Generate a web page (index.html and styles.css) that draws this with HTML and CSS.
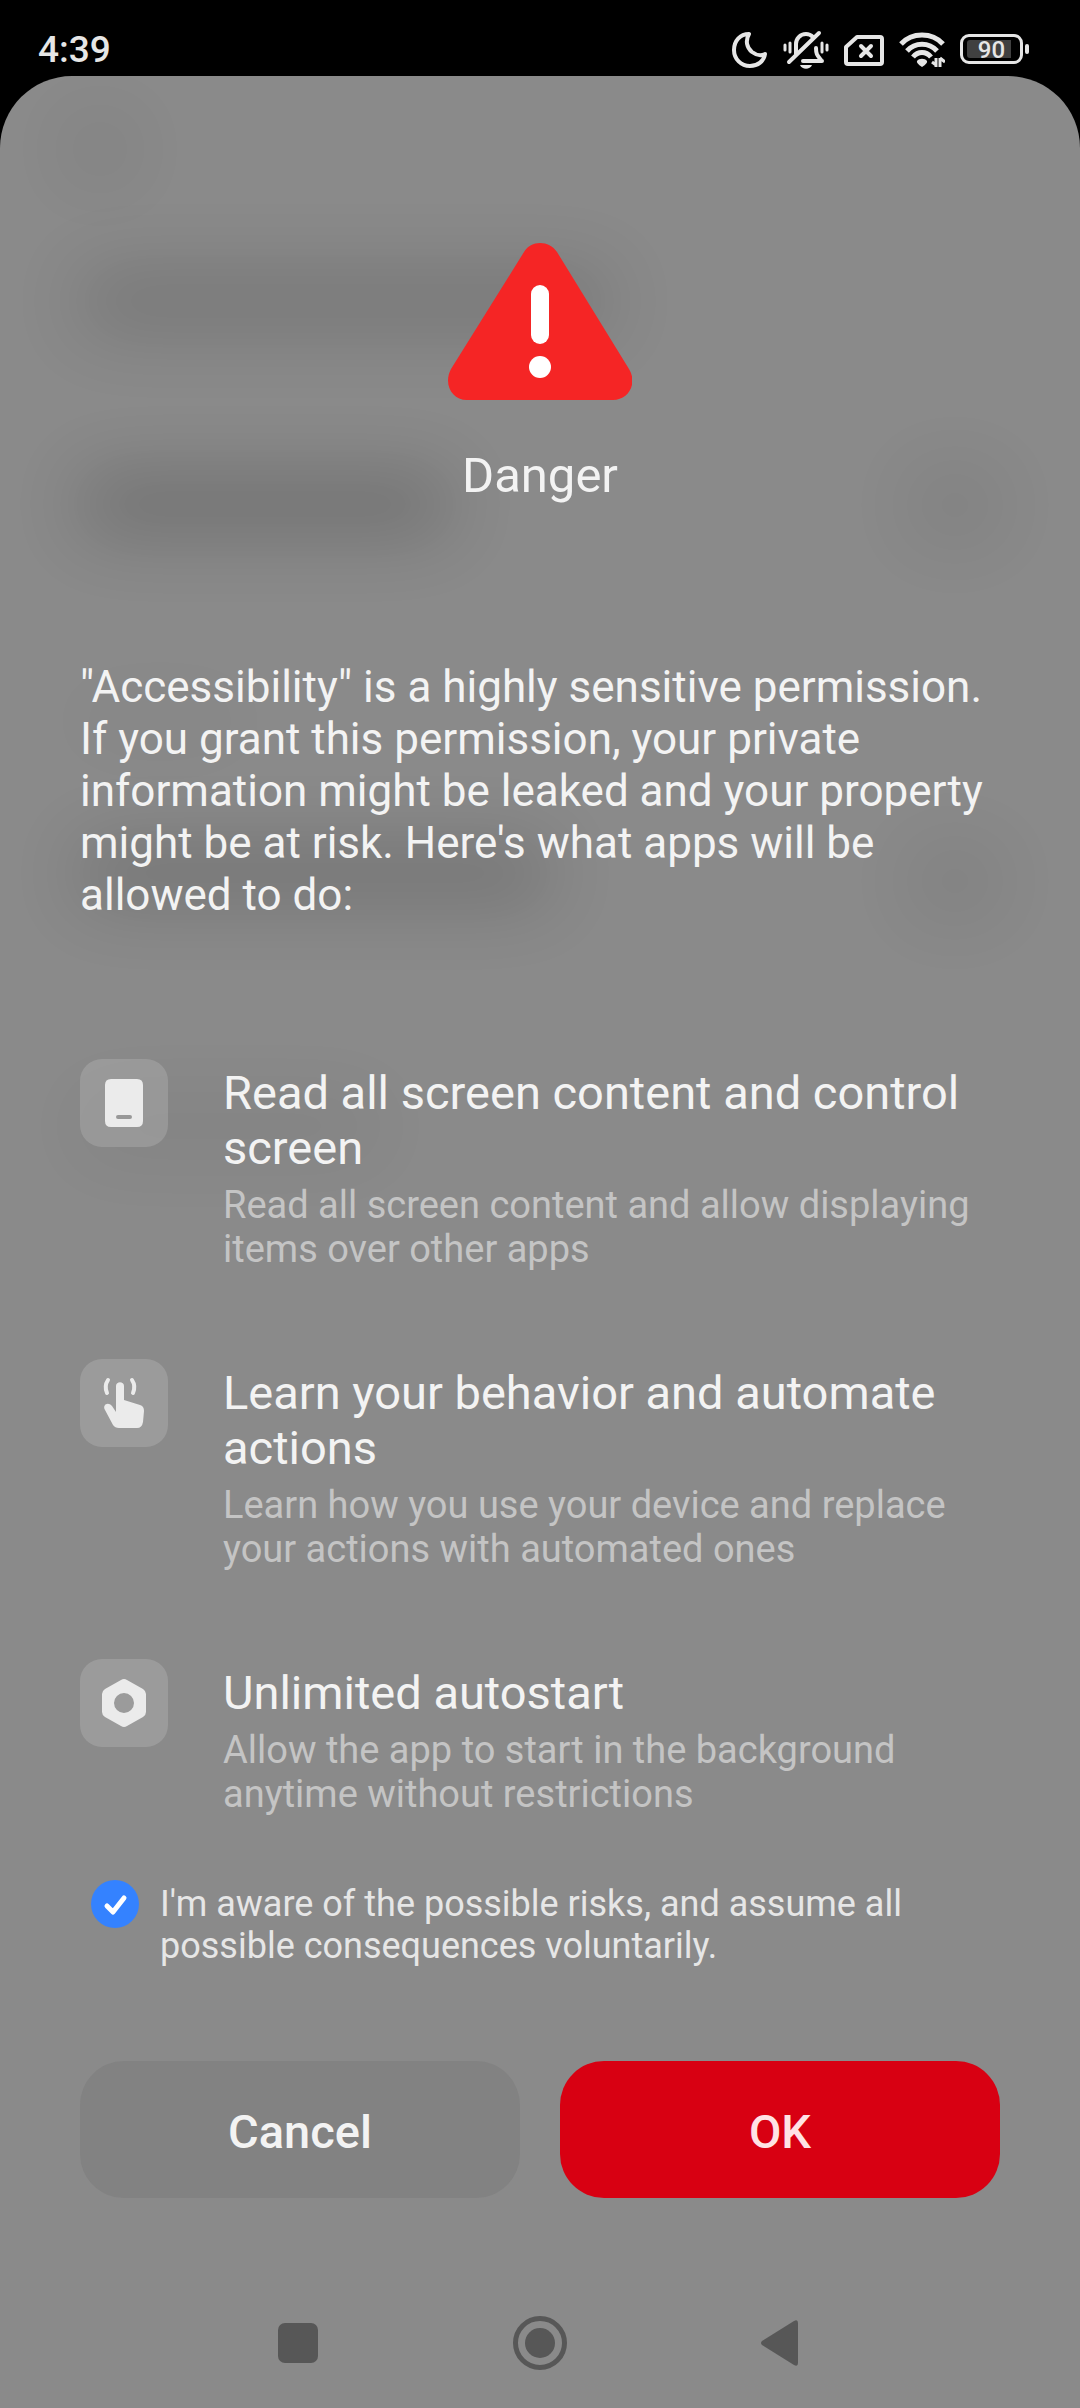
FILE: index.html
```html
<!DOCTYPE html>
<html lang="en">
<head>
<meta charset="utf-8">
<meta name="viewport" content="width=device-width, initial-scale=1">
<title>Danger</title>
<link rel="stylesheet" href="styles.css">
</head>
<body>
<header class="status">
  <time class="clock">4:39</time>
  <div class="status-icons">
    <svg width="38" height="44" viewBox="0 0 38 44" fill="none" stroke="#e6e6e6" stroke-width="4" stroke-linejoin="round" role="img" aria-label="Do not disturb"><path d="M19 7C10 7 4 14 4 23c0 9 7 16 16 16 8 0 14-5 15-12-4 2-9 1-13-2-5-4-7-11-3-18z"/></svg>
    <svg width="46" height="44" viewBox="0 0 46 44" fill="none" stroke="#e6e6e6" stroke-width="4" stroke-linecap="round" role="img" aria-label="Muted">
      <path d="M13 27V17c0-5 4-10 10-10 3 0 5 1 7 3M33 21c0 6 1 7 5 12M20 34h19"/>
      <path d="M6 35 36 6"/>
      <path stroke-width="3" d="M2 18v5M7 16v9M39 16v9M44 18v5"/>
      <path d="M17 38h12c-2 5-10 5-12 0z" fill="#e6e6e6" stroke="none"/>
    </svg>
    <svg width="40" height="44" viewBox="0 0 40 44" fill="none" stroke="#e6e6e6" stroke-width="4" role="img" aria-label="No SIM">
      <path stroke-linejoin="round" d="M13 10h23q2 0 2 2v23q0 2-2 2H4q-2 0-2-2V20z"/>
      <path stroke-linecap="round" d="m17 19 10 10M27 19 17 29"/>
    </svg>
    <svg width="46" height="44" viewBox="0 0 46 44" fill="none" stroke="#e6e6e6" stroke-width="4" role="img" aria-label="Wi-Fi">
      <path stroke-width="5" d="M2 17c11-12 31-12 42 0M8 24c8-9 22-9 30 0M14 30c5-6 13-6 18 0"/>
      <path fill="#e6e6e6" stroke="none" d="M18 34c2-3 8-3 10 0q1 2-5 6-6-4-5-6z"/>
      <path stroke-width="3" d="M37 31v9M33 35l4 3M41 40v-9M41 31l5 4"/>
    </svg>
    <span class="battery"><span class="battery-body"><span class="battery-level">90</span></span><span class="battery-tip"></span></span>
  </div>
</header>
<main class="sheet">
  <div class="behind" aria-hidden="true">
    <span class="shade shade-back"></span>
    <span class="shade shade-heading"></span>
    <span class="shade shade-first"></span>
    <span class="shade shade-first-switch"></span>
    <span class="shade shade-label"></span>
    <span class="shade shade-second"></span>
    <span class="shade shade-second-switch"></span>
    <span class="shade shade-third"></span>
  </div>

  <svg class="warning" viewBox="0 0 184 158" aria-hidden="true">
    <path fill="#f52525" d="M76 9c7-12 25-12 33 0l72 117c9 15-1 31-16 31H19C4 157-5 141 3 126z"/>
    <rect x="83" y="42" width="18" height="59" rx="9" fill="#fff"/>
    <circle cx="92" cy="124" r="11" fill="#fff"/>
  </svg>
  <h1 class="title">Danger</h1>
  <p class="intro">"Accessibility" is a highly sensitive permission. If you grant this permission, your private information might be leaked and your property might be at risk. Here's what apps will be allowed to do:</p>

  <ul class="permissions">
    <li class="permission">
      <span class="tile"><svg viewBox="0 0 88 88" aria-hidden="true"><path fill="#ebebeb" fill-rule="evenodd" d="M31 20h26q6 0 6 6v36q0 6-6 6H31q-6 0-6-6V26q0-6 6-6zm7 36q-2 0-2 2t2 2h12q2 0 2-2t-2-2z"/></svg></span>
      <div class="permission-text">
        <h2 class="permission-title">Read all screen content and control screen</h2>
        <p class="permission-note">Read all screen content and allow displaying items over other apps</p>
      </div>
    </li>
    <li class="permission">
      <span class="tile"><svg viewBox="0 0 88 88" aria-hidden="true">
        <path fill="#ebebeb" d="M36 27c0-5 8-5 8 0v14l16 5q4 1 4 6l-1 11q-1 6-6 6H39q-4 0-6-3L25 51c-3-5 3-9 7-4l4 6z"/>
        <path fill="none" stroke="#ebebeb" stroke-width="4" stroke-linecap="round" d="M28 21q-4 6-1 13M52 21q4 6 1 13"/>
      </svg></span>
      <div class="permission-text">
        <h2 class="permission-title">Learn your behavior and automate actions</h2>
        <p class="permission-note">Learn how you use your device and replace your actions with automated ones</p>
      </div>
    </li>
    <li class="permission">
      <span class="tile"><svg viewBox="0 0 88 88" aria-hidden="true"><path fill="#ebebeb" fill-rule="evenodd" d="M41 21q3-2 6 0l16 9q3 2 3 5v18q0 3-3 5l-16 9q-3 2-6 0l-16-9q-3-2-3-5V35q0-3 3-5zm3 13a10 10 0 1 0 0 20 10 10 0 1 0 0-20z"/></svg></span>
      <div class="permission-text">
        <h2 class="permission-title">Unlimited autostart</h2>
        <p class="permission-note">Allow the app to start in the background anytime without restrictions</p>
      </div>
    </li>
  </ul>

  <label class="consent">
    <span class="check">
      <input class="check-input" type="checkbox" checked>
      <svg class="check-mark" viewBox="0 0 48 48" aria-hidden="true"><path fill="none" stroke="#fff" stroke-width="5" stroke-linecap="round" stroke-linejoin="round" d="m16 26 6 6 11-14"/></svg>
    </span>
    <span class="consent-text">I'm aware of the possible risks, and assume all possible consequences voluntarily.</span>
  </label>

  <div class="actions">
    <button class="action action-cancel" type="button">Cancel</button>
    <button class="action action-ok" type="button">OK</button>
  </div>

  <nav class="system-nav">
    <button class="nav-button" type="button" aria-label="Recents"><svg viewBox="0 0 54 54" fill="#575757"><rect x="7" y="7" width="40" height="40" rx="7"/></svg></button>
    <button class="nav-button" type="button" aria-label="Home"><svg viewBox="0 0 54 54" fill="#575757"><circle cx="27" cy="27" r="24.5" fill="none" stroke="#575757" stroke-width="5"/><circle cx="27" cy="27" r="15"/></svg></button>
    <button class="nav-button" type="button" aria-label="Back"><svg viewBox="0 0 54 54" fill="#575757"><path d="M7 25 39 5q4-2 4 2v40q0 4-4 2L7 29q-2-2 0-4z"/></svg></button>
  </nav>
</main>
</body>
</html>
```
FILE: styles.css
```css
* {
  box-sizing: border-box;
  margin: 0;
  padding: 0;
}

body {
  display: flex;
  flex-direction: column;
  min-height: 100vh;
  background: #000;
  color: #f3f3f3;
  font-family: Roboto, "Liberation Sans", sans-serif;
}

svg {
  display: block;
}

button {
  border: 0;
  font: inherit;
}

/* Status bar */

.status {
  display: flex;
  justify-content: space-between;
  height: 76px;
  padding: 27px 51px 0 38px;
  color: #e6e6e6;
}

.clock {
  padding-top: 1px;
  font-size: 37px;
  font-weight: 500;
  line-height: 44px;
}

.status-icons {
  display: flex;
  align-items: flex-start;
  gap: 15px;
}

.battery {
  display: flex;
  align-items: center;
  gap: 2px;
  margin-top: 7px;
}

.battery-body {
  width: 63px;
  height: 30px;
  padding: 3px 4px;
  border: 3px solid #e6e6e6;
  border-radius: 9px;
}

.battery-level {
  display: block;
  height: 18px;
  border-radius: 3px;
  background: linear-gradient(90deg, #404040 90%, transparent 90%);
  font-size: 24px;
  font-weight: 500;
  line-height: 20px;
  text-align: center;
}

.battery-tip {
  width: 4px;
  height: 10px;
  border-radius: 2px;
  background: #e6e6e6;
}

/* Sheet */

.sheet {
  position: relative;
  display: flex;
  flex: 1;
  flex-direction: column;
  padding: 167px 80px 38px;
  overflow: hidden;
  border-radius: 72px 72px 0 0;
  background: #8a8a8a;
  isolation: isolate;
}

/* Out-of-focus settings page showing through the sheet */

.behind {
  position: absolute;
  inset: 0;
  z-index: -1;
}

.shade {
  position: absolute;
  border-radius: 20px;
  background: #000;
  filter: blur(36px);
}

.shade-back { top: 48px; left: 75px; width: 50px; height: 50px; opacity: .12; }
.shade-heading { top: 194px; left: 80px; width: 530px; height: 62px; opacity: .14; }
.shade-first { top: 398px; left: 80px; width: 370px; height: 60px; opacity: .19; }
.shade-first-switch { top: 392px; left: 910px; width: 90px; height: 74px; opacity: .07; }
.shade-label { top: 630px; left: 80px; width: 160px; height: 30px; opacity: .04; }
.shade-second { top: 768px; left: 80px; width: 470px; height: 58px; opacity: .17; }
.shade-second-switch { top: 768px; left: 910px; width: 90px; height: 74px; opacity: .07; }
.shade-third { top: 1020px; left: 80px; width: 300px; height: 60px; opacity: .05; }

.warning {
  width: 184px;
  height: 158px;
  align-self: center;
}

.title {
  margin-top: 47px;
  font-size: 49px;
  font-weight: 400;
  line-height: 56px;
  text-align: center;
}

.intro {
  margin-top: 157px;
  font-size: 44px;
  line-height: 52px;
}

.permissions {
  display: flex;
  flex-direction: column;
  gap: 88px;
  margin-top: 138px;
  list-style: none;
}

.permission {
  display: flex;
  align-items: flex-start;
  gap: 55px;
}

.tile {
  flex: none;
  width: 88px;
  height: 88px;
  border-radius: 22px;
  background: rgba(255, 255, 255, .15);
}

.permission-text {
  flex: 1;
  padding-top: 6px;
}

.permission-title {
  font-size: 47px;
  font-weight: 400;
  line-height: 55px;
}

.permission-note {
  margin-top: 8px;
  color: #c4c4c4;
  font-size: 38px;
  line-height: 44px;
}

.consent {
  display: flex;
  align-items: flex-start;
  gap: 21px;
  margin-top: 64px;
  padding: 0 80px 0 11px;
}

.check {
  display: grid;
  flex: none;
}

.check-input,
.check-mark {
  grid-area: 1 / 1;
  width: 48px;
  height: 48px;
}

.check-input {
  appearance: none;
  border-radius: 50%;
}

.check-input:checked {
  background: #3482ff;
}

.check-mark {
  visibility: hidden;
  pointer-events: none;
}

.check-input:checked + .check-mark {
  visibility: visible;
}

.consent-text {
  padding-top: 3px;
  color: #e6e6e6;
  font-size: 36px;
  line-height: 42px;
}

.actions {
  display: grid;
  grid-template-columns: 1fr 1fr;
  gap: 40px;
  margin-top: 94px;
}

.action {
  height: 137px;
  padding-top: 3px;
  border-radius: 44px;
  font-size: 47px;
  font-weight: 500;
}

.action-cancel {
  background: #828282;
  color: #f3f3f3;
}

.action-ok {
  background: #d80012;
  color: #ffe3e5;
}

.system-nav {
  display: flex;
  justify-content: center;
  gap: 188px;
  margin-top: auto;
}

.nav-button {
  width: 54px;
  height: 54px;
  background: none;
}
```
